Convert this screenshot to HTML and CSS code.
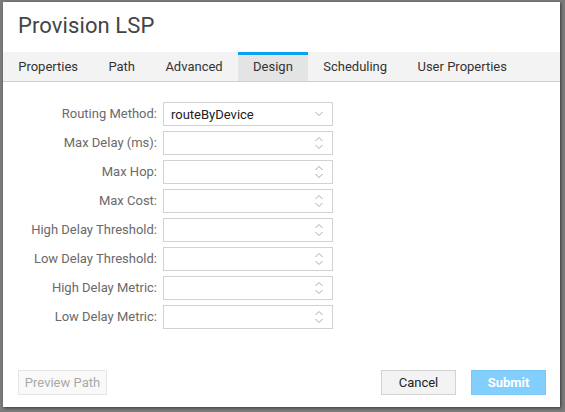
FILE: index.html
```html
<!DOCTYPE html>
<html>
<head>
<meta charset="utf-8">
<link rel="stylesheet" href="styles.css">
</head>
<body>
<div class="dialog">
  <div class="header"><h1 class="title">Provision LSP</h1></div>
  <div class="tabs">
    <div class="tab">Properties</div>
    <div class="tab">Path</div>
    <div class="tab">Advanced</div>
    <div class="tab active">Design</div>
    <div class="tab">Scheduling</div>
    <div class="tab">User Properties</div>
  </div>
  <div class="content">
    <div class="form">
      <label class="lbl">Routing Method:</label>
      <div class="field select"><span class="value">routeByDevice</span>
        <svg class="chev" width="10" height="6" viewBox="0 0 10 6"><path d="M1.5 1 L5 4.5 L8.5 1" fill="none" stroke="#aaa" stroke-width="1"/></svg>
      </div>
      <label class="lbl">Max Delay (ms):</label>
      <div class="field"><svg class="spin" width="10" height="16" viewBox="0 0 10 16"><path d="M1.5 6 L5 2.5 L8.5 6 M1.5 10 L5 13.5 L8.5 10" fill="none" stroke="#aaa" stroke-width="1"/></svg></div>
      <label class="lbl">Max Hop:</label>
      <div class="field"><svg class="spin" width="10" height="16" viewBox="0 0 10 16"><path d="M1.5 6 L5 2.5 L8.5 6 M1.5 10 L5 13.5 L8.5 10" fill="none" stroke="#aaa" stroke-width="1"/></svg></div>
      <label class="lbl">Max Cost:</label>
      <div class="field"><svg class="spin" width="10" height="16" viewBox="0 0 10 16"><path d="M1.5 6 L5 2.5 L8.5 6 M1.5 10 L5 13.5 L8.5 10" fill="none" stroke="#aaa" stroke-width="1"/></svg></div>
      <label class="lbl">High Delay Threshold:</label>
      <div class="field"><svg class="spin" width="10" height="16" viewBox="0 0 10 16"><path d="M1.5 6 L5 2.5 L8.5 6 M1.5 10 L5 13.5 L8.5 10" fill="none" stroke="#aaa" stroke-width="1"/></svg></div>
      <label class="lbl">Low Delay Threshold:</label>
      <div class="field"><svg class="spin" width="10" height="16" viewBox="0 0 10 16"><path d="M1.5 6 L5 2.5 L8.5 6 M1.5 10 L5 13.5 L8.5 10" fill="none" stroke="#aaa" stroke-width="1"/></svg></div>
      <label class="lbl">High Delay Metric:</label>
      <div class="field"><svg class="spin" width="10" height="16" viewBox="0 0 10 16"><path d="M1.5 6 L5 2.5 L8.5 6 M1.5 10 L5 13.5 L8.5 10" fill="none" stroke="#aaa" stroke-width="1"/></svg></div>
      <label class="lbl">Low Delay Metric:</label>
      <div class="field"><svg class="spin" width="10" height="16" viewBox="0 0 10 16"><path d="M1.5 6 L5 2.5 L8.5 6 M1.5 10 L5 13.5 L8.5 10" fill="none" stroke="#aaa" stroke-width="1"/></svg></div>
    </div>
  </div>
  <div class="footer">
    <button class="btn btn-disabled">Preview Path</button>
    <div class="spacer"></div>
    <button class="btn btn-cancel">Cancel</button>
    <button class="btn btn-submit">Submit</button>
  </div>
</div>
</body>
</html>
```
FILE: styles.css
```css
* { box-sizing: border-box; }
html, body {
  margin: 0;
  padding: 0;
}
body {
  width: 565px;
  height: 412px;
  background: #7c7c7c;
  font-family: Roboto, "Liberation Sans", Arial, sans-serif;
  overflow: hidden;
  padding: 2px 0 0 3px;
}
.dialog {
  width: 557px;
  height: 405px;
  background: #fff;
  display: flex;
  flex-direction: column;
  box-shadow: 1px 1px 3px rgba(0,0,0,0.55);
}
.header {
  height: 50px;
  padding: 11px 0 0 15px;
}
.title {
  margin: 0;
  font-size: 22px;
  line-height: 26px;
  font-weight: 400;
  color: #444;
  letter-spacing: 0.1px;
}
.tabs {
  display: flex;
  height: 30px;
  background: #f3f3f3;
  border-bottom: 1px solid #cfcfcf;
}
.tab {
  padding: 0 15.2px;
  font-size: 13px;
  line-height: 29px;
  color: #333;
}
.tab.active {
  background: #e4e4e4;
  box-shadow: inset 0 3px 0 #0aa3ef;
}
.content {
  flex: 1;
  padding-top: 20px;
}
.form {
  display: grid;
  grid-template-columns: 154px 170px;
  grid-auto-rows: 24px;
  column-gap: 6px;
  row-gap: 5px;
}
.lbl {
  text-align: right;
  font-size: 13px;
  line-height: 24px;
  color: #6a6a6a;
  white-space: nowrap;
}
.field {
  border: 1px solid #d2d2d2;
  display: flex;
  align-items: center;
  justify-content: flex-end;
  padding: 0 7px 0 7px;
  background: #fff;
}
.field.select {
  justify-content: space-between;
}
.value {
  font-size: 13px;
  color: #222;
}
.chev { display: block; margin-right: 1px; }
.spin { display: block; margin-right: 1px; }
.footer {
  display: flex;
  align-items: flex-end;
  padding: 0 14px 12px 15px;
}
.spacer { flex: 1; }
.btn {
  height: 25px;
  font-family: Roboto, "Liberation Sans", Arial, sans-serif;
  font-size: 13px;
  border: 1px solid #d0d0d0;
  padding: 0;
  margin: 0;
}
.btn-disabled {
  width: 89px;
  background: #f9f9f9;
  border-color: #e6e6e6;
  color: #a9a9a9;
}
.btn-cancel {
  width: 75px;
  background: #f3f3f3;
  border-color: #d3d3d3;
  color: #222;
}
.btn-submit {
  width: 75px;
  margin-left: 15px;
  background: #82cffd;
  border-color: #7ac6f5;
  color: #fff;
  font-weight: 700;
}
```
